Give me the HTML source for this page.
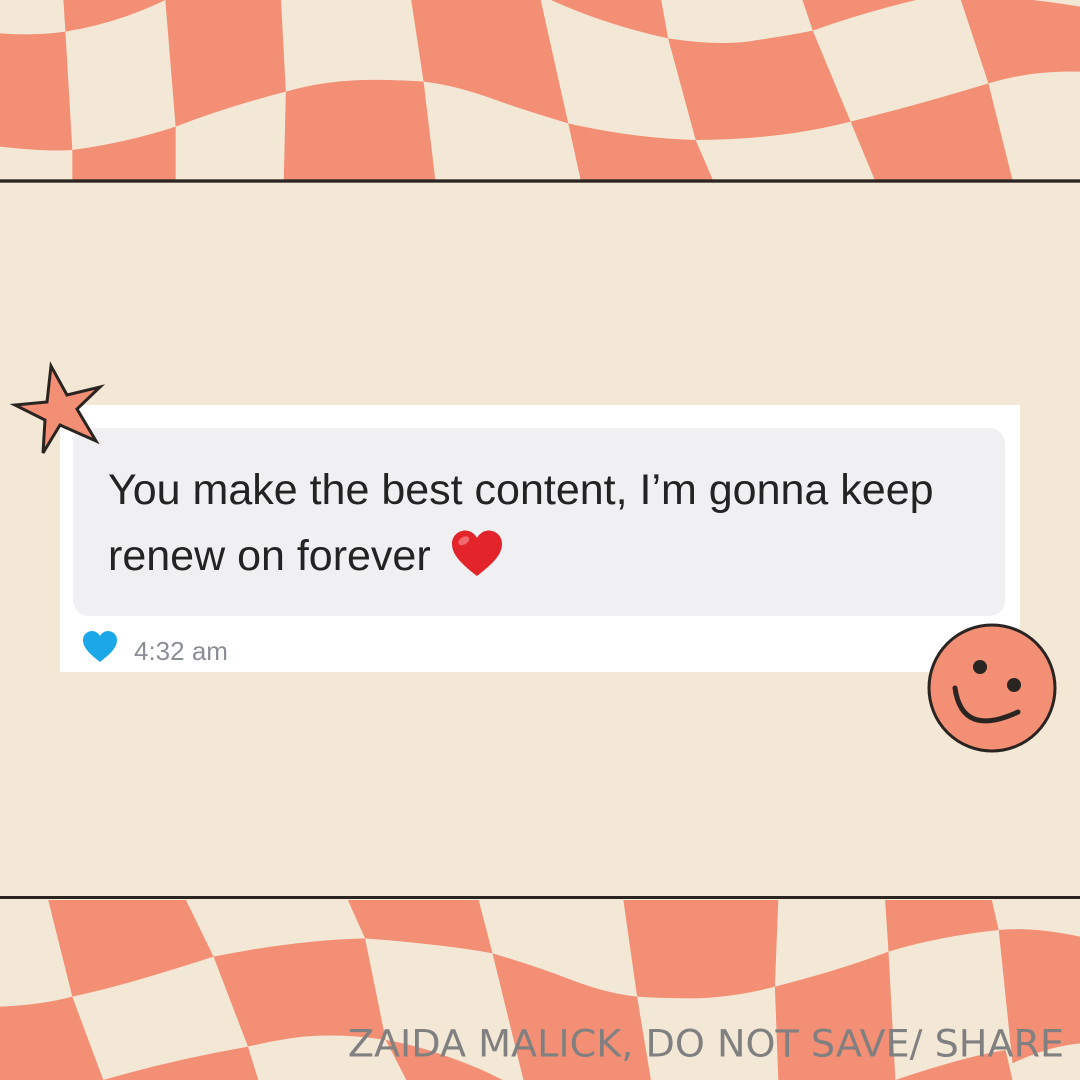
<!DOCTYPE html>
<html><head><meta charset="utf-8"><style>
html,body{margin:0;padding:0;}
body{width:1080px;height:1080px;position:relative;overflow:hidden;background:#f3e8d6;font-family:"Liberation Sans",sans-serif;}
.band{position:absolute;left:0;width:1080px;height:190px;}
.card{position:absolute;left:60px;top:405px;width:960px;height:267px;background:#fff;}
.bubble{position:absolute;left:13px;top:23px;width:932px;height:188px;background:#f0f0f2;border-radius:16px;}
.msg{position:absolute;left:48px;top:52px;font-size:43px;line-height:66px;color:#232323;white-space:nowrap;}
.time{position:absolute;left:74px;top:231px;font-size:26px;color:#8a8f96;}
</style></head><body>
<svg class="band" style="top:0" viewBox="0 0 1568 570" preserveAspectRatio="none">
<rect width="1568" height="570" fill="#f3e8d6"/>
<g fill="#f38f75">
<path d="M0,100 Q50,108 95,95 L105,450 Q70,456 0,440Z"/>
<path d="M92,0 L408,0 L415,275 Q330,320 255,380 L240,0 Q170,70 95,95Z"/>
<path d="M105,450 Q180,430 255,380 L255,540 L105,540Z"/>
<path d="M415,275 Q480,235 560,240 Q600,242 615,245 L632,540 L412,540Z"/>
<path d="M597,0 L785,0 L825,370 Q760,330 720,300 Q660,255 615,245Z"/>
<path d="M785,0 L960,0 L970,115 Q880,75 800,0Z"/>
<path d="M970,115 Q1050,140 1100,120 Q1150,105 1180,92 L1235,365 Q1130,420 1010,420Z"/>
<path d="M1165,0 L1330,0 Q1250,40 1180,92Z"/>
<path d="M1395,0 L1500,0 Q1540,10 1568,20 L1568,215 Q1500,210 1435,250Z"/>
<path d="M825,370 Q920,415 1010,420 L1035,540 L843,540Z"/>
<path d="M1235,365 Q1340,310 1435,250 L1470,540 L1270,540Z"/>
</g>
<rect x="0" y="538" width="1568" height="10" fill="#2b2522"/>
</svg>
<svg class="band" style="top:890px" viewBox="0 0 1568 570" preserveAspectRatio="none">
<rect width="1568" height="570" fill="#f3e8d6"/>
<g fill="#f38f75">
<path d="M70,30 L270,30 L310,200 Q250,240 200,270 Q150,300 105,320Z"/>
<path d="M505,30 L695,30 L715,190 Q650,165 530,145Z"/>
<path d="M905,30 L1130,30 L1125,290 Q1060,325 1000,325 Q960,325 925,320Z"/>
<path d="M1285,30 L1440,30 L1450,120 Q1360,140 1290,185Z"/>
<path d="M310,200 Q430,150 530,145 L560,450 Q500,430 440,440 Q400,450 360,470Z"/>
<path d="M0,350 Q60,345 105,320 L150,570 L0,570Z"/>
<path d="M150,570 Q250,510 360,470 L375,570Z"/>
<path d="M560,450 Q620,470 700,540 L730,570 L590,570Z"/>
<path d="M715,190 Q780,230 830,270 Q880,310 925,320 L945,570 L760,570Z"/>
<path d="M1125,290 Q1220,240 1290,185 L1300,570 L1130,570Z"/>
<path d="M1300,570 Q1400,500 1460,480 L1470,570Z"/>
<path d="M1450,120 Q1500,110 1568,140 L1568,460 Q1520,470 1470,520Z"/>
</g>
<rect x="0" y="18" width="1568" height="9" fill="#2b2522"/>
<text x="505" y="500" textLength="1040" lengthAdjust="spacingAndGlyphs" font-family="DejaVu Sans, sans-serif" font-size="112" fill="#808080">ZAIDA MALICK, DO NOT SAVE/ SHARE</text>
</svg>
<div class="card"><div class="bubble"></div>
<div class="msg">You make the best content, I’m gonna keep<br>renew on forever</div>
<svg style="position:absolute;left:390px;top:124px" width="54" height="50" viewBox="0 0 36 34"><path d="M18,32 C8,24 1,18 1,10 C1,4 6,1 10,1 C14,1 17,4 18,6 C19,4 22,1 26,1 C30,1 35,4 35,10 C35,18 28,24 18,32Z" fill="#e3242b"/><ellipse cx="9" cy="8" rx="4" ry="2.5" fill="#f26a6e" transform="rotate(-30 9 8)"/></svg>
<svg style="position:absolute;left:22px;top:225px" width="36" height="34" viewBox="0 0 36 34"><path d="M18,32 C8,24 1,18 1,10 C1,4 6,1 10,1 C14,1 17,4 18,6 C19,4 22,1 26,1 C30,1 35,4 35,10 C35,18 28,24 18,32Z" fill="#1ba7e8"/></svg>
<div class="time">4:32 am</div>
</div>
<svg style="position:absolute;left:0;top:350px" width="120" height="120" viewBox="0 350 120 120">
<path d="M51,366 L67,395 L100,387 L77,409 L96,441 L60,425 L43,453 L45,420 L15,405 L47,402Z" fill="#f38f75" stroke="#2b2522" stroke-width="3" stroke-linejoin="miter"/>
</svg>
<svg style="position:absolute;left:920px;top:620px" width="145" height="140" viewBox="920 620 145 140">
<circle cx="992" cy="688" r="63" fill="#f38f75" stroke="#2b2522" stroke-width="3"/>
<circle cx="980" cy="667" r="7" fill="#2b2522"/>
<circle cx="1014" cy="685" r="7" fill="#2b2522"/>
<path d="M955,688 Q962,738 1018,712" fill="none" stroke="#2b2522" stroke-width="5" stroke-linecap="round"/>
</svg>
</body></html>
